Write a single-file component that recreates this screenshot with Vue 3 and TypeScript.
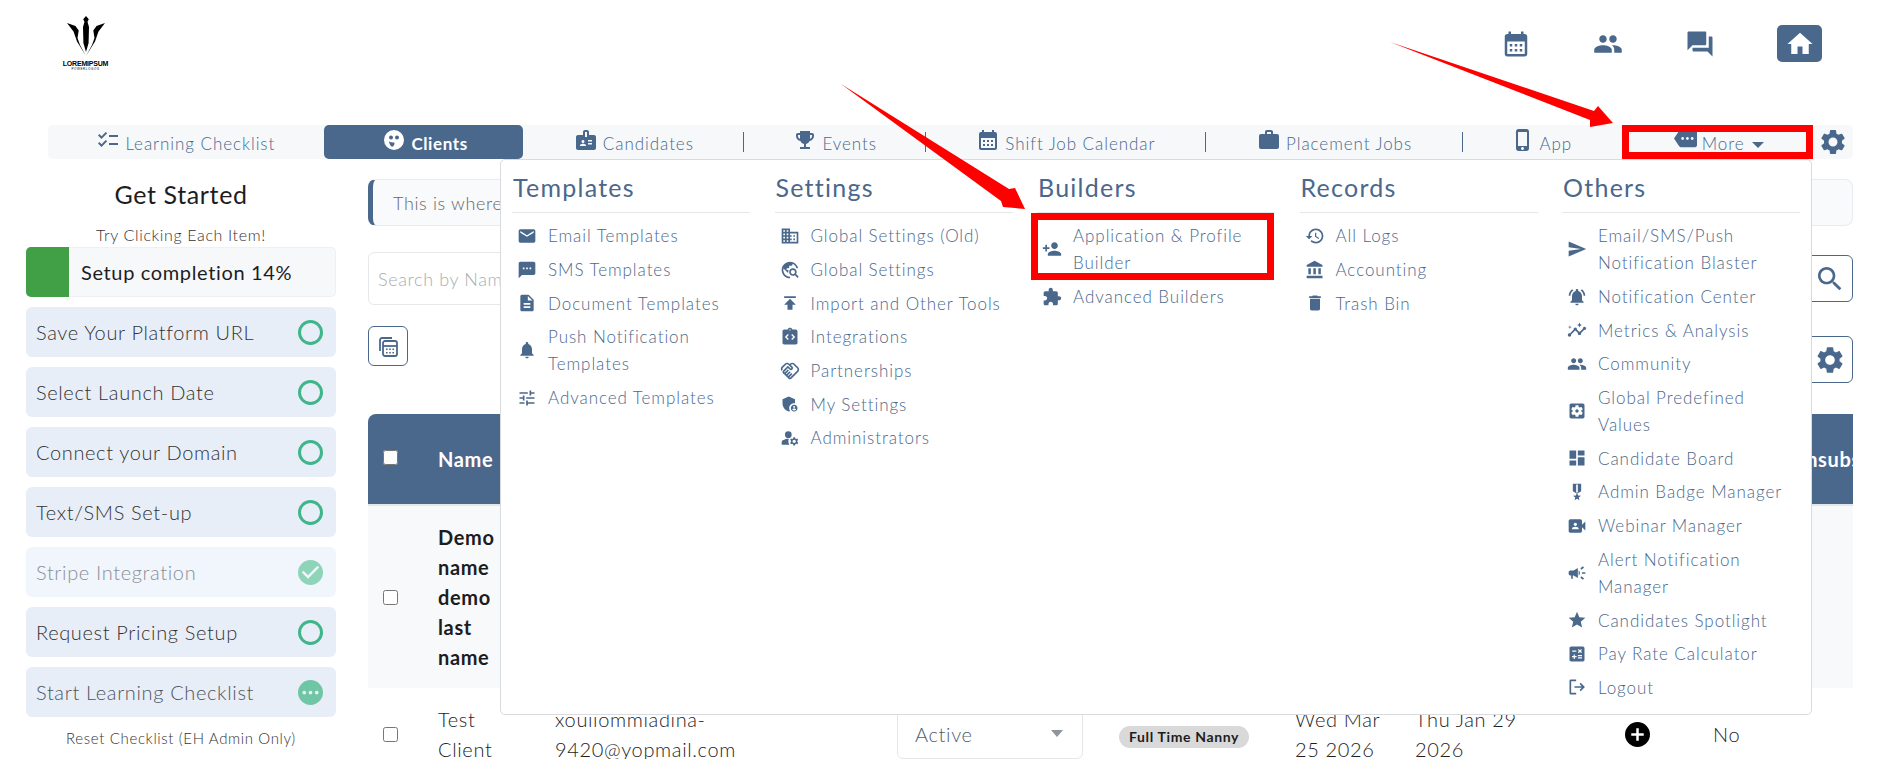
<script setup lang="ts">
const P: Record<string, string> = {
  email: 'M20 4H4c-1.1 0-1.99.9-1.99 2L2 18c0 1.1.9 2 2 2h16c1.1 0 2-.9 2-2V6c0-1.1-.9-2-2-2zm0 4l-8 5-8-5V6l8 5 8-5v2z',
  sms: 'M20 2H4c-1.1 0-1.99.9-1.99 2L2 22l4-4h14c1.1 0 2-.9 2-2V4c0-1.1-.9-2-2-2zM9 11H7V9h2v2zm4 0h-2V9h2v2zm4 0h-2V9h2v2z',
  doc: 'M14 2H6c-1.1 0-1.99.9-1.99 2L4 20c0 1.1.89 2 1.99 2H18c1.1 0 2-.9 2-2V8l-6-6zm2 16H8v-2h8v2zm0-4H8v-2h8v2zm-3-5V3.5L18.5 9H13z',
  bell: 'M12 22c1.1 0 2-.9 2-2h-4c0 1.1.89 2 2 2zm6-6v-5c0-3.07-1.64-5.64-4.5-6.32V4c0-.83-.67-1.5-1.5-1.5s-1.5.67-1.5 1.5v.68C7.63 5.36 6 7.92 6 11v5l-2 2v1h16v-1l-2-2z',
  tune: 'M3 17v2h6v-2H3zM3 5v2h10V5H3zm10 16v-2h8v-2h-8v-2h-2v6h2zM7 9v2H3v2h4v2h2V9H7zm14 4v-2H11v2h10zm-6-4h2V7h4V5h-4V3h-2v6z',
  domain: 'M12 7V3H2v18h20V7H12zM6 19H4v-2h2v2zm0-4H4v-2h2v2zm0-4H4V9h2v2zm0-4H4V5h2v2zm4 12H8v-2h2v2zm0-4H8v-2h2v2zm0-4H8V9h2v2zm0-4H8V5h2v2zm10 12h-8v-2h2v-2h-2v-2h2v-2h-2V9h8v10zm-2-8h-2v2h2v-2zm0 4h-2v2h2v-2z',
  globe: 'M19.3 16.9c.4-.7.7-1.5.7-2.4 0-2.5-2-4.5-4.5-4.5S11 12 11 14.5s2 4.5 4.5 4.5c.9 0 1.7-.3 2.4-.7l3.2 3.2 1.4-1.4-3.2-3.2zm-3.8.1c-1.4 0-2.5-1.1-2.5-2.5s1.1-2.5 2.5-2.5 2.5 1.1 2.5 2.5-1.1 2.5-2.5 2.5zM12 20v2C6.48 22 2 17.52 2 12S6.48 2 12 2c4.84 0 8.87 3.44 9.8 8h-2.07c-.64-2.46-2.4-4.47-4.73-5.41V5c0 1.1-.9 2-2 2h-2v2c0 .55-.45 1-1 1H8v2h2v3H9l-4.79-4.79C4.08 10.79 4 11.38 4 12c0 4.41 3.59 8 8 8z',
  publish: 'M5 4v2h14V4H5zm0 10h4v6h6v-6h4l-7-7-7 7z',
  integ: 'M19 3h-4.18C14.4 1.84 13.3 1 12 1s-2.4.84-2.82 2H5c-1.1 0-2 .9-2 2v14c0 1.1.9 2 2 2h14c1.1 0 2-.9 2-2V5c0-1.1-.9-2-2-2zm-7-.25c.41 0 .75.34.75.75s-.34.75-.75.75-.75-.34-.75-.75.34-.75.75-.75zM10.5 14.3l-1.2 1.2L5.8 12l3.5-3.5 1.2 1.2L8.2 12l2.3 2.3zm4.2 1.2l-1.2-1.2 2.3-2.3-2.3-2.3 1.2-1.2 3.5 3.5-3.5 3.5z',
  shake: 'M12.22 19.85c-.18.18-.5.21-.71 0-.18-.18-.21-.5 0-.71l3.39-3.39-1.41-1.41-3.39 3.39c-.19.2-.51.19-.71 0-.21-.21-.18-.53 0-.71l3.39-3.39-1.41-1.41-3.39 3.39c-.18.18-.5.21-.71 0-.19-.19-.19-.51 0-.71l3.39-3.39-1.42-1.41-3.39 3.39c-.18.18-.5.21-.71 0-.19-.2-.19-.51 0-.71L9.52 8.4l1.87 1.86c.95.95 2.59.94 3.54 0 .98-.98.98-2.56 0-3.54l-1.86-1.86.28-.28c.78-.78 2.05-.78 2.83 0l4.24 4.24c.78.78.78 2.05 0 2.83l-8.2 8.2zm9.61-6.78c1.56-1.56 1.56-4.09 0-5.66l-4.24-4.24c-1.56-1.56-4.09-1.56-5.66 0l-.28.28-.28-.28c-1.56-1.56-4.09-1.56-5.66 0L2.17 6.71c-1.42 1.42-1.55 3.63-.4 5.19l1.45-1.45c-.39-.75-.26-1.7.37-2.33l3.54-3.54c.78-.78 2.05-.78 2.83 0l3.56 3.56c.18.18.21.5 0 .71-.21.21-.53.18-.71 0L9.52 5.57l-5.8 5.79c-.98.97-.98 2.56 0 3.54.39.39.89.63 1.42.7.07.52.3 1.02.7 1.42.4.4.9.63 1.42.7.07.52.3 1.02.7 1.42.4.4.9.63 1.42.7.07.54.31 1.03.7 1.42.47.47 1.1.73 1.77.73.67 0 1.3-.26 1.77-.73l8.21-8.19z',
  shield: 'M17 11c.34 0 .67.04 1 .09V6.27L10.5 3 3 6.27v4.91c0 4.54 3.2 8.79 7.5 9.82.55-.13 1.08-.32 1.6-.55-.69-.98-1.1-2.17-1.1-3.45 0-3.31 2.69-6 6-6zM17 13c-2.21 0-4 1.79-4 4s1.79 4 4 4 4-1.79 4-4-1.79-4-4-4zm0 1.38c.62 0 1.12.51 1.12 1.12s-.51 1.12-1.12 1.12-1.12-.51-1.12-1.12.5-1.12 1.12-1.12zm0 5.37c-.93 0-1.74-.46-2.24-1.17.05-.72 1.51-1.08 2.24-1.08s2.19.36 2.24 1.08c-.5.71-1.31 1.17-2.24 1.17z',
  admins: 'M10.67 13.02c-.22-.01-.44-.02-.67-.02-2.42 0-4.68.67-6.61 1.82-.88.52-1.39 1.5-1.39 2.53V20h9.26c-.79-1.13-1.26-2.51-1.26-4 0-1.07.25-2.07.67-2.98zM10 12a4 4 0 100-8 4 4 0 000 8zM20.75 16c0-.22-.03-.42-.06-.63l1.14-1.01-1-1.73-1.45.49c-.32-.27-.68-.48-1.08-.63L18 11h-2l-.3 1.49c-.4.15-.76.36-1.08.63l-1.45-.49-1 1.73 1.14 1.01c-.03.21-.06.41-.06.63s.03.42.06.63l-1.14 1.01 1 1.73 1.45-.49c.32.27.68.48 1.08.63L16 21h2l.3-1.49c.4-.15.76-.36 1.08-.63l1.45.49 1-1.73-1.14-1.01c.03-.21.06-.41.06-.63zM17 18c-1.1 0-2-.9-2-2s.9-2 2-2 2 .9 2 2-.9 2-2 2z',
  personAdd: 'M15 12c2.21 0 4-1.79 4-4s-1.79-4-4-4-4 1.79-4 4 1.79 4 4 4zm-9-2V7H4v3H1v2h3v3h2v-3h3v-2H6zm9 4c-2.67 0-8 1.34-8 4v2h16v-2c0-2.66-5.33-4-8-4z',
  ext: 'M20.5 11H19V7c0-1.1-.9-2-2-2h-4V3.5C13 2.12 11.88 1 10.5 1S8 2.12 8 3.5V5H4c-1.1 0-1.99.9-1.99 2v3.8H3.5c1.49 0 2.7 1.21 2.7 2.7s-1.21 2.7-2.7 2.7H2V20c0 1.1.9 2 2 2h3.8v-1.5c0-1.49 1.21-2.7 2.7-2.7 1.49 0 2.7 1.21 2.7 2.7V22H17c1.1 0 2-.9 2-2v-4h1.5c1.38 0 2.5-1.12 2.5-2.5S21.88 11 20.5 11z',
  history: 'M13 3c-4.97 0-9 4.03-9 9H1l3.89 3.89.07.14L9 12H6c0-3.87 3.13-7 7-7s7 3.13 7 7-3.13 7-7 7c-1.93 0-3.68-.79-4.94-2.06l-1.42 1.42C8.27 19.99 10.51 21 13 21c4.97 0 9-4.03 9-9s-4.03-9-9-9zm-1 5v5l4.28 2.54.72-1.21-3.5-2.08V8H12z',
  bank: 'M4 10v7h3v-7H4zm6 0v7h3v-7h-3zM2 22h19v-3H2v3zm14-12v7h3v-7h-3zm-4.5-9L2 6v2h19V6l-9.5-5z',
  trash: 'M6 19c0 1.1.9 2 2 2h8c1.1 0 2-.9 2-2V7H6v12zM19 4h-3.5l-1-1h-5l-1 1H5v2h14V4z',
  send: 'M2.01 21L23 12 2.01 3 2 10l15 2-15 2z',
  bellActive: 'M7.58 4.08L6.15 2.65C3.75 4.48 2.17 7.3 2.03 10.5h2c.15-2.65 1.51-4.97 3.55-6.42zm12.39 6.42h2c-.15-3.2-1.73-6.02-4.12-7.85l-1.42 1.43c2.02 1.45 3.39 3.77 3.54 6.42zM18 11c0-3.07-1.64-5.64-4.5-6.32V4c0-.83-.67-1.5-1.5-1.5s-1.5.67-1.5 1.5v.68C7.63 5.36 6 7.92 6 11v5l-2 2v1h16v-1l-2-2v-5zm-6 11c.14 0 .27-.01.4-.04.65-.14 1.18-.58 1.44-1.18.1-.24.15-.5.15-.78h-4c.01 1.1.9 2 2.01 2z',
  insights: 'M21 8c-1.45 0-2.26 1.44-1.93 2.51l-3.55 3.56c-.3-.09-.74-.09-1.04 0l-2.55-2.55C12.27 10.45 11.46 9 10 9c-1.45 0-2.27 1.44-1.93 2.52l-4.56 4.55C2.44 15.74 1 16.55 1 18c0 1.1.9 2 2 2 1.45 0 2.26-1.44 1.93-2.51l4.55-4.56c.3.09.74.09 1.04 0l2.55 2.55C12.73 16.55 13.54 18 15 18c1.45 0 2.27-1.44 1.93-2.52l3.56-3.55c1.07.33 2.51-.48 2.51-1.93 0-1.1-.9-2-2-2zM15 9l.94-2.07L18 6l-2.06-.93L15 3l-.92 2.07L12 6l2.08.93zM3.5 11L4 9l2-.5L4 8l-.5-2L3 8l-2 .5L3 9z',
  people: 'M16 11c1.66 0 2.99-1.34 2.99-3S17.66 5 16 5c-1.66 0-3 1.34-3 3s1.34 3 3 3zm-8 0c1.66 0 2.99-1.34 2.99-3S9.66 5 8 5C6.34 5 5 6.34 5 8s1.34 3 3 3zm0 2c-2.33 0-7 1.17-7 3.5V19h14v-2.5c0-2.33-4.67-3.5-7-3.5zm8 0c-.29 0-.62.02-.97.05 1.16.84 1.97 1.97 1.97 3.45V19h6v-2.5c0-2.33-4.67-3.5-7-3.5z',
  settingsBox: 'M12 10c-1.1 0-2 .9-2 2s.9 2 2 2 2-.9 2-2-.9-2-2-2zm7-7H5c-1.11 0-2 .9-2 2v14c0 1.1.89 2 2 2h14c1.11 0 2-.9 2-2V5c0-1.1-.89-2-2-2zm-1.75 9c0 .23-.02.46-.05.68l1.48 1.16c.13.11.17.3.08.45l-1.4 2.42c-.09.15-.27.21-.43.15l-1.74-.7c-.36.28-.76.51-1.18.69l-.26 1.85c-.03.17-.18.3-.35.3h-2.8c-.17 0-.32-.13-.35-.29l-.26-1.85c-.43-.18-.82-.41-1.18-.69l-1.74.7c-.16.06-.34 0-.43-.15l-1.4-2.42c-.09-.15-.05-.34.08-.45l1.48-1.16c-.03-.23-.05-.46-.05-.69 0-.23.02-.46.05-.68l-1.48-1.16c-.13-.11-.17-.3-.08-.45l1.4-2.42c.09-.15.27-.21.43-.15l1.74.7c.36-.28.76-.51 1.18-.69l.26-1.85c.03-.17.18-.3.35-.3h2.8c.17 0 .32.13.35.29l.26 1.85c.43.18.82.41 1.18.69l1.74-.7c.16-.06.34 0 .43.15l1.4 2.42c.09.15.05.34-.08.45l-1.48 1.16c.03.23.05.46.05.69z',
  dash: 'M3 13h8V3H3v10zm0 8h8v-6H3v6zm10 0h8V11h-8v10zm0-18v6h8V3h-8z',
  medal: 'M17 10.43V2H7v8.43c0 .35.18.68.49.86l4.18 2.51-.99 2.34-3.41.29 2.59 2.24L9.07 22 12 20.23 14.93 22l-.78-3.33 2.59-2.24-3.41-.29-.99-2.34 4.18-2.51c.3-.18.48-.5.48-.86zm-4 1.8l-1 .6-1-.6V3h2v9.23z',
  video: 'M18 10.48V6c0-1.1-.9-2-2-2H4c-1.1 0-2 .9-2 2v12c0 1.1.9 2 2 2h12c1.1 0 2-.9 2-2v-4.48l4 3.98v-11l-4 3.98zM10 8c1.1 0 2 .9 2 2s-.9 2-2 2-2-.9-2-2 .9-2 2-2zm4 8H6v-.57c0-.81.48-1.53 1.22-1.85.85-.37 1.79-.58 2.78-.58.99 0 1.93.21 2.78.58.74.32 1.22 1.04 1.22 1.85V16z',
  campaign: 'M18 11v2h4v-2h-4zm-2 6.61c.96.71 2.21 1.65 3.2 2.39.4-.53.8-1.07 1.2-1.6-.99-.74-2.24-1.68-3.2-2.4-.4.54-.8 1.08-1.2 1.61zM20.4 5.6c-.4-.53-.8-1.07-1.2-1.6-.99.74-2.24 1.68-3.2 2.4.4.53.8 1.07 1.2 1.6.96-.72 2.21-1.65 3.2-2.4zM4 9c-1.1 0-2 .9-2 2v2c0 1.1.9 2 2 2h1v4h2v-4h1l5 3V6L8 9H4zm11.5 3c0-1.33-.58-2.53-1.5-3.35v6.69c.92-.81 1.5-2.01 1.5-3.34z',
  star: 'M12 17.27L18.18 21l-1.64-7.03L22 9.24l-7.19-.61L12 2 9.19 8.63 2 9.24l5.46 4.73L5.82 21z',
  calc: 'M19 3H5c-1.1 0-2 .9-2 2v14c0 1.1.9 2 2 2h14c1.1 0 2-.9 2-2V5c0-1.1-.9-2-2-2zm-5.97 4.06L14.09 6l1.41 1.41L16.91 6l1.06 1.06-1.41 1.41 1.41 1.41-1.06 1.06-1.41-1.4-1.41 1.41-1.06-1.06 1.41-1.41-1.41-1.42zm-6.78.66h5v1.5h-5v-1.5zM11.5 16h-2v2H8v-2H6v-1.5h2v-2h1.5v2h2V16zm6.5 1.25h-5v-1.5h5v1.5zm0-2.5h-5v-1.5h5v1.5z',
  logout: 'M11 3H4.5A1.5 1.5 0 003 4.5v15A1.5 1.5 0 004.5 21H11v-2H5V5h6V3zM16.5 7l-1.4 1.4 2.6 2.6H9v2h8.7l-2.6 2.6 1.4 1.4 5-5-5-5z',
  calendar: 'M19 4h-1V2h-2v2H8V2H6v2H5c-1.1 0-2 .9-2 2v14c0 1.1.9 2 2 2h14c1.1 0 2-.9 2-2V6c0-1.1-.9-2-2-2zm0 16H5V10h14v10zM9 14H7v-2h2v2zm4 0h-2v-2h2v2zm4 0h-2v-2h2v2zm-8 4H7v-2h2v2zm4 0h-2v-2h2v2zm4 0h-2v-2h2v2z',
  forum: 'M21 6h-2v9H6v2c0 .55.45 1 1 1h11l4 4V7c0-.55-.45-1-1-1zm-4 6V3c0-.55-.45-1-1-1H3c-.55 0-1 .45-1 1v14l4-4h10c.55 0 1-.45 1-1z',
  home: 'M10 20v-6h4v6h5v-8h3L12 3 2 12h3v8z',
  gear: 'M19.14 12.94c.04-.3.06-.61.06-.94 0-.32-.02-.64-.07-.94l2.03-1.58c.18-.14.23-.41.12-.61l-1.92-3.32c-.12-.22-.37-.29-.59-.22l-2.39.96c-.5-.38-1.03-.7-1.62-.94l-.36-2.54c-.04-.24-.24-.41-.48-.41h-3.84c-.24 0-.43.17-.47.41l-.36 2.54c-.59.24-1.13.57-1.62.94l-2.39-.96c-.22-.08-.47 0-.59.22L2.74 8.87c-.12.21-.08.47.12.61l2.03 1.58c-.05.3-.09.63-.09.94s.02.64.07.94l-2.03 1.58c-.18.14-.23.41-.12.61l1.92 3.32c.12.22.37.29.59.22l2.39-.96c.5.38 1.03.7 1.62.94l.36 2.54c.05.24.24.41.48.41h3.84c.24 0 .44-.17.47-.41l.36-2.54c.59-.24 1.13-.56 1.62-.94l2.39.96c.22.08.47 0 .59-.22l1.92-3.32c.12-.22.07-.47-.12-.61l-2.01-1.58zM12 15.6c-1.98 0-3.6-1.62-3.6-3.6s1.62-3.6 3.6-3.6 3.6 1.62 3.6 3.6-1.62 3.6-3.6 3.6z',
  search: 'M15.5 14h-.79l-.28-.27C15.41 12.59 16 11.11 16 9.5 16 5.91 13.09 3 9.5 3S3 5.91 3 9.5 5.91 16 9.5 16c1.61 0 3.09-.59 4.23-1.57l.27.28v.79l5 4.99L20.49 19l-4.99-5zm-6 0C7.01 14 5 11.99 5 9.5S7.01 5 9.5 5 14 7.01 14 9.5 11.99 14 9.5 14z',
  checklist: 'M22 7h-9v2h9V7zm0 8h-9v2h9v-2zM5.54 11L2 7.46l1.41-1.41 2.12 2.12 4.24-4.24 1.41 1.41L5.54 11zm0 8L2 15.46l1.41-1.41 2.12 2.12 4.24-4.24 1.41 1.41L5.54 19z',
  face: 'M12 2a10 10 0 100 20 10 10 0 000-20zM9 7.5a2 2 0 110 4 2 2 0 010-4zm6 0a2 2 0 110 4 2 2 0 010-4zM7 13.5c2 1 3.5 1.3 5.5 1 0 2-.5 4-2.5 4.3-1.6-.7-2.6-3-3-5.3z',
  badge: 'M20 7h-5V4c0-1.1-.9-2-2-2h-2c-1.1 0-2 .9-2 2v3H4c-1.1 0-2 .9-2 2v11c0 1.1.9 2 2 2h16c1.1 0 2-.9 2-2V9c0-1.1-.9-2-2-2zM9 12c.83 0 1.5.67 1.5 1.5S9.83 15 9 15s-1.5-.67-1.5-1.5S8.17 12 9 12zm3 6H6v-.75c0-1 2-1.5 3-1.5s3 .5 3 1.5V18zm1-9h-2V4h2v5zm5 7.5h-4V15h4v1.5zm0-3h-4V12h4v1.5z',
  trophy: 'M19 5h-2V3H7v2H5c-1.1 0-2 .9-2 2v1c0 2.55 1.92 4.63 4.39 4.94.63 1.5 1.98 2.63 3.61 2.96V19H7v2h10v-2h-4v-3.1c1.63-.33 2.98-1.46 3.61-2.96C19.08 12.63 21 10.55 21 8V7c0-1.1-.9-2-2-2zM5 8V7h2v3.82C5.84 10.4 5 9.3 5 8zm14 0c0 1.3-.84 2.4-2 2.82V7h2v1z',
  work: 'M20 6h-4V4c0-1.11-.89-2-2-2h-4c-1.11 0-2 .89-2 2v2H4c-1.11 0-1.99.89-1.99 2L2 19c0 1.11.89 2 2 2h16c1.11 0 2-.89 2-2V8c0-1.11-.89-2-2-2zm-6 0h-4V4h4v2z',
  phone: 'M15.5 1h-8C6.12 1 5 2.12 5 3.5v17C5 21.88 6.12 23 7.5 23h8c1.38 0 2.5-1.12 2.5-2.5v-17C18 2.12 16.88 1 15.5 1zm-4 21c-.83 0-1.5-.67-1.5-1.5s.67-1.5 1.5-1.5 1.5.67 1.5 1.5-.67 1.5-1.5 1.5zm4.5-4H7V4h9v14z',
  more: 'M22 3H7c-.69 0-1.23.35-1.59.88L0 12l5.41 8.11c.36.53.9.89 1.59.89h15c1.1 0 2-.9 2-2V5c0-1.1-.9-2-2-2zM9 13.5c-.83 0-1.5-.67-1.5-1.5s.67-1.5 1.5-1.5 1.5.67 1.5 1.5-.67 1.5-1.5 1.5zm5 0c-.83 0-1.5-.67-1.5-1.5s.67-1.5 1.5-1.5 1.5.67 1.5 1.5-.67 1.5-1.5 1.5zm5 0c-.83 0-1.5-.67-1.5-1.5s.67-1.5 1.5-1.5 1.5.67 1.5 1.5-.67 1.5-1.5 1.5z',
  check: 'M12 2a10 10 0 100 20 10 10 0 000-20zm-2 15l-5-5 1.4-1.4 3.6 3.6 7.6-7.6L19 8l-9 9z',
  dots: 'M12 2a10 10 0 100 20 10 10 0 000-20zM7 13.5a1.5 1.5 0 110-3 1.5 1.5 0 010 3zm5 0a1.5 1.5 0 110-3 1.5 1.5 0 010 3zm5 0a1.5 1.5 0 110-3 1.5 1.5 0 010 3z',
  plus: 'M12 2a10 10 0 100 20 10 10 0 000-20zm5 11h-4v4h-2v-4H7v-2h4V7h2v4h4v2z',
}

const topIcons = ['calendar', 'people', 'forum']

const navItems = [
  { label: 'Learning Checklist', icon: 'checklist', w: 276 },
  { label: 'Clients', icon: 'face', w: 200, active: true },
  { label: 'Candidates', icon: 'badge', w: 221, sep: true },
  { label: 'Events', icon: 'trophy', w: 182, sep: true },
  { label: 'Shift Job Calendar', icon: 'calendar', w: 280, sep: true },
  { label: 'Placement Jobs', icon: 'work', w: 258, sep: true },
  { label: 'App', icon: 'phone', w: 156 },
]

const steps = [
  { label: 'Save Your Platform URL', state: 'open' },
  { label: 'Select Launch Date', state: 'open' },
  { label: 'Connect your Domain', state: 'open' },
  { label: 'Text/SMS Set-up', state: 'open' },
  { label: 'Stripe Integration', state: 'done' },
  { label: 'Request Pricing Setup', state: 'open' },
  { label: 'Start Learning Checklist', state: 'busy' },
]

const menu = [
  {
    title: 'Templates',
    items: [
      { icon: 'email', label: 'Email Templates' },
      { icon: 'sms', label: 'SMS Templates' },
      { icon: 'doc', label: 'Document Templates' },
      { icon: 'bell', label: 'Push Notification Templates' },
      { icon: 'tune', label: 'Advanced Templates' },
    ],
  },
  {
    title: 'Settings',
    items: [
      { icon: 'domain', label: 'Global Settings (Old)' },
      { icon: 'globe', label: 'Global Settings' },
      { icon: 'publish', label: 'Import and Other Tools' },
      { icon: 'integ', label: 'Integrations' },
      { icon: 'shake', label: 'Partnerships' },
      { icon: 'shield', label: 'My Settings' },
      { icon: 'admins', label: 'Administrators' },
    ],
  },
  {
    title: 'Builders',
    items: [
      { icon: 'personAdd', label: 'Application & Profile Builder' },
      { icon: 'ext', label: 'Advanced Builders' },
    ],
  },
  {
    title: 'Records',
    items: [
      { icon: 'history', label: 'All Logs' },
      { icon: 'bank', label: 'Accounting' },
      { icon: 'trash', label: 'Trash Bin' },
    ],
  },
  {
    title: 'Others',
    items: [
      { icon: 'send', label: 'Email/SMS/Push Notification Blaster' },
      { icon: 'bellActive', label: 'Notification Center' },
      { icon: 'insights', label: 'Metrics & Analysis' },
      { icon: 'people', label: 'Community' },
      { icon: 'settingsBox', label: 'Global Predefined Values' },
      { icon: 'dash', label: 'Candidate Board' },
      { icon: 'medal', label: 'Admin Badge Manager' },
      { icon: 'video', label: 'Webinar Manager' },
      { icon: 'campaign', label: 'Alert Notification Manager' },
      { icon: 'star', label: 'Candidates Spotlight' },
      { icon: 'calc', label: 'Pay Rate Calculator' },
      { icon: 'logout', label: 'Logout' },
    ],
  },
]
</script>

<template>
  <div class="page">
    <header class="top">
      <div class="logo">
        <svg class="logo-mark" viewBox="0 0 38 40">
          <path d="M19 0l2.8 3.2-1.3 2.6 1.5 5.2-.4 16-2.6 9-2.6-9-.4-16 1.5-5.2-1.3-2.6zM0 7l8.5 3 3.2 4.5-1.2 7.5 2.5 7L19 40l-9-14.5-3.5-10zM38 7l-8.5 3-3.2 4.5 1.2 7.5-2.5 7L19 40l9-14.5 3.5-10z" />
        </svg>
        <span class="logo-name">LOREMIPSUM</span>
        <span class="logo-sub">POWERLOGOS</span>
      </div>
      <div class="top-icons">
        <span v-for="name in topIcons" :key="name" class="top-icon">
          <svg viewBox="0 0 24 24"><path :d="P[name]" /></svg>
        </span>
        <span class="home-btn"><svg viewBox="0 0 24 24"><path :d="P.home" /></svg></span>
      </div>
    </header>

    <nav class="nav">
      <a
        v-for="item in navItems"
        :key="item.label"
        class="nav-item"
        :class="{ active: item.active, sep: item.sep }"
        :style="{ width: item.w + 'px' }"
      >
        <svg class="nav-icon" viewBox="0 0 24 24"><path :d="P[item.icon]" /></svg>
        <span>{{ item.label }}</span>
      </a>
      <a class="nav-item more">
        <svg class="nav-icon more-icon" viewBox="0 0 24 24"><path :d="P.more" /></svg>
        <span>More</span>
        <i class="caret"></i>
      </a>
      <a class="nav-gear"><svg viewBox="0 0 24 24"><path :d="P.gear" /></svg></a>
    </nav>

    <div class="content">
      <aside class="side">
        <h2>Get Started</h2>
        <p class="try">Try Clicking Each Item!</p>
        <div class="progress">
          <div class="progress-fill"></div>
          <span>Setup completion 14%</span>
        </div>
        <div v-for="s in steps" :key="s.label" class="step" :class="s.state">
          <span>{{ s.label }}</span>
          <i v-if="s.state === 'open'" class="ring"></i>
          <svg v-else-if="s.state === 'done'" class="mark faded" viewBox="2 2 20 20"><path :d="P.check" /></svg>
          <svg v-else class="mark" viewBox="2 2 20 20"><path :d="P.dots" /></svg>
        </div>
        <p class="reset">Reset Checklist (EH Admin Only)</p>
      </aside>

      <main class="main">
        <div class="info">This is where you can view and manage all of your clients.</div>

        <div class="search-row">
          <div class="search-input">Search by Name, Email or Phone</div>
          <button class="out-btn search-btn"><svg viewBox="0 0 24 24"><path :d="P.search" /></svg></button>
        </div>

        <div class="tool-row">
          <button class="out-btn calc-btn">
            <svg viewBox="0 0 24 24" fill="none">
              <path class="thin" d="M4 17V6a2 2 0 012-2h10" />
              <rect class="thin" x="7" y="7" width="14" height="15" rx="2" />
              <path class="thin" d="M7 12h14" />
              <path class="dots" d="M10 14.5h1.6v1.6H10zm3.2 0h1.6v1.6h-1.6zm3.2 0H18v1.6h-1.6zM10 18h1.6v1.6H10zm3.2 0h1.6v1.6h-1.6zm3.2 0H18v1.6h-1.6z" />
            </svg>
          </button>
          <button class="out-btn gear-btn"><svg viewBox="0 0 24 24"><path :d="P.gear" /></svg></button>
        </div>

        <div class="table-wrap">
          <table>
            <colgroup>
              <col style="width: 70px" /><col style="width: 117px" /><col style="width: 342px" />
              <col style="width: 222px" /><col style="width: 176px" /><col style="width: 120px" />
              <col style="width: 210px" /><col style="width: 88px" /><col style="width: 140px" />
            </colgroup>
            <thead>
              <tr>
                <th class="box-cell"><input type="checkbox" /></th>
                <th>Name</th>
                <th>Email</th>
                <th>Status</th>
                <th>Tags</th>
                <th>Created</th>
                <th>Updated</th>
                <th>Notes</th>
                <th class="unsub"><span>Unsubscribed</span></th>
              </tr>
            </thead>
            <tbody>
              <tr class="odd">
                <td class="box-cell"><input type="checkbox" /></td>
                <td><b>Demo<br />name<br />demo<br />last<br />name</b></td>
                <td colspan="7"></td>
              </tr>
              <tr>
                <td class="box-cell"><input type="checkbox" /></td>
                <td>Test<br />Client</td>
                <td>xouiiommiadina-<br />9420@yopmail.com</td>
                <td><div class="select"><span>Active</span><i></i></div></td>
                <td><span class="chip">Full Time Nanny</span></td>
                <td>Wed Mar<br />25 2026</td>
                <td>Thu Jan 29<br />2026</td>
                <td><svg class="plus" viewBox="2 2 20 20"><path :d="P.plus" /></svg></td>
                <td>No</td>
              </tr>
            </tbody>
          </table>
        </div>
      </main>
    </div>

    <section class="dropdown">
      <div v-for="col in menu" :key="col.title" class="dd-col">
        <h3>{{ col.title }}</h3>
        <a v-for="it in col.items" :key="it.label" class="dd-item">
          <svg viewBox="0 0 24 24"><path :d="P[it.icon]" /></svg>
          <span>{{ it.label }}</span>
        </a>
      </div>
    </section>

    <div class="hl hl-more"></div>
    <div class="hl hl-builder"></div>
    <svg class="arrows" viewBox="0 0 1898 759">
      <polygon points="841,84 1009,189 1015,188 1025,209 1003,207 1001,201" />
      <polygon points="1390,42 1594,111 1598,106 1613,123 1590,127 1590,120" />
    </svg>
  </div>
</template>

<style>
html, body { margin: 0; overflow: hidden; background: #fff; }
</style>

<style scoped>
.page {
  position: relative;
  width: 1898px;
  height: 759px;
  overflow: hidden;
  background: #fff;
  color: #1d1d1f;
  font-family: "Lato", "Noto Sans", sans-serif;
  font-weight: 300;
  letter-spacing: 0.04em;
}
svg { fill: currentColor; display: block; }

.top { height: 125px; display: flex; justify-content: space-between; box-sizing: border-box; padding: 16px 76px 0 64px; }
.logo { display: flex; flex-direction: column; align-items: center; width: 43px; color: #000; }
.logo-mark { width: 38px; height: 40px; }
.logo-name { font: 800 7px/8px "Liberation Sans", sans-serif; letter-spacing: -0.2px; margin-top: 4px; white-space: nowrap; }
.logo-sub { font: 400 3px/3px "Liberation Sans", sans-serif; letter-spacing: 0.6px; white-space: nowrap; }

.top-icons { display: flex; align-items: flex-start; color: #4a688c; padding-top: 9px; gap: 62px; }
.top-icon { display: block; width: 30px; height: 30px; margin-top: 4px; }
.top-icon svg { width: 30px; height: 30px; }
.home-btn { width: 45px; height: 37px; background: #4a688c; color: #fff; border-radius: 5px; display: flex; align-items: center; justify-content: center; }
.home-btn svg { width: 30px; height: 30px; }

.nav { height: 34px; margin-left: 48px; width: 1805px; background: #f6f8fa; border-radius: 5px; display: flex; }
.nav-item { position: relative; display: flex; align-items: center; justify-content: center; gap: 5px; height: 34px; font-size: 17px; letter-spacing: 0.055em; color: #4a688c; white-space: nowrap; box-sizing: border-box; padding-top: 2px; }
.nav-item.sep::after { content: ""; position: absolute; right: 0; top: 7px; height: 20px; width: 1px; background: #4a688c; }
.nav-item.active { background: #4a688c; color: #fff; font-weight: 700; letter-spacing: 0.035em; border-radius: 5px; }
.nav-icon { width: 24px; height: 24px; margin-top: -7px; color: #4a688c; flex: none; }
.active .nav-icon { color: #fff; margin-left: 3px; }
.more { width: 191px; padding-left: 8px; }
.more-icon { width: 23px; height: 23px; margin-top: -9px; }
.caret { width: 0; height: 0; border: 6px solid transparent; border-top: 6px solid #4a688c; border-bottom: 0; margin-left: 2px; margin-top: 3px; }
.nav-gear { width: 40px; display: flex; align-items: center; justify-content: center; color: #4a688c; padding-left: 3px; }
.nav-gear svg { width: 30px; height: 30px; }

.content { display: flex; }
.side { width: 310px; margin-left: 26px; flex: none; }
.side h2 { margin: 20px 0 0; text-align: center; font-size: 25px; font-weight: 400; line-height: 30px; }
.try { margin: 14px 0 0; text-align: center; font-size: 16px; line-height: 24px; color: #333; }
.progress { display: flex; align-items: center; height: 50px; margin-top: 0; background: #f7f8fa; border-radius: 5px; box-shadow: 0 0 0 1px #eef0f3 inset; overflow: hidden; font-size: 20px; font-weight: 400; }
.progress-fill { width: 43px; height: 100%; background: #41a046; margin-right: 12px; }
.step { display: flex; align-items: center; justify-content: space-between; height: 50px; margin-top: 10px; padding: 0 13px 0 10px; background: #e8eef8; border-radius: 6px; font-size: 20px; color: #333; }
.step.done { background: #f1f5fc; color: #8b8f95; }
.step.busy { color: #4e5560; }
.ring { display: block; width: 25px; height: 25px; box-sizing: border-box; border: 3px solid #3fb58a; border-radius: 50%; }
.mark { width: 25px; height: 25px; color: #6fc6a4; }
.mark.faded { color: #8ed4b8; }
.reset { margin: 11px 0 0; text-align: center; font-size: 15px; line-height: 20px; color: #333; }

.main { position: relative; width: 1485px; margin-left: 32px; flex: none; }
.info { margin-top: 20px; height: 47px; box-sizing: border-box; border: 1px solid #e8ebef; border-left: 5px solid #4a688c; border-radius: 8px; background: #f9fafc; padding-left: 20px; display: flex; align-items: center; font-size: 18px; color: #666; }
.search-row { display: flex; align-items: center; justify-content: space-between; margin-top: 26px; height: 53px; gap: 8px; }
.search-input { flex: 1; height: 53px; box-sizing: border-box; border: 1px solid #e6e8eb; border-radius: 6px; padding-left: 9px; display: flex; align-items: center; font-size: 18px; color: #a9adb2; }
.out-btn { box-sizing: border-box; background: #fff; border: 1px solid #4a688c; border-radius: 6px; color: #4a688c; padding: 0; display: flex; align-items: center; justify-content: center; }
.search-btn { width: 86px; height: 47px; padding-left: 40px; }
.search-btn svg { width: 32px; height: 32px; }
.tool-row { display: flex; justify-content: space-between; align-items: flex-start; margin-top: 21px; height: 57px; }
.calc-btn { width: 40px; height: 40px; }
.calc-btn svg { width: 24px; height: 24px; }
.thin { stroke: #4a688c; stroke-width: 1.8; fill: none; }
.dots { fill: #4a688c; }
.gear-btn { width: 86px; height: 47px; margin-top: 10px; padding-left: 40px; }
.gear-btn svg { width: 32px; height: 32px; }

.table-wrap { margin-top: 31px; overflow: hidden; border-radius: 8px 0 0 0; }
table { border-collapse: collapse; table-layout: fixed; width: 1485px; font-size: 20px; line-height: 30px; }
th { height: 90px; padding: 0; background: #4a688c; color: #fff; font-weight: 700; text-align: left; border-bottom: 2px solid #e4e6e9; white-space: nowrap; overflow: hidden; }
td { padding: 16px 0; vertical-align: middle; white-space: nowrap; }
td b { font-weight: 700; }
.odd td { background: #f8f9fb; }
.box-cell { padding-left: 15px; box-sizing: border-box; }
input[type="checkbox"] { display: block; width: 15px; height: 15px; margin: 0; }
th.box-cell input { margin-bottom: 4px; }
.unsub span { margin-left: 78px; }
.select { display: flex; align-items: center; justify-content: space-between; width: 186px; height: 50px; margin-top: -1px; box-sizing: border-box; border: 1px solid #e4e6ea; border-radius: 6px; padding: 0 19px 0 17px; color: #4f6073; }
.select i { width: 0; height: 0; border: 6px solid transparent; border-top: 7px solid #8f959b; border-bottom: 0; }
.chip { display: inline-block; background: #d9d9d9; border-radius: 11px; padding: 0 10px; font-size: 14px; font-weight: 700; line-height: 22px; }
.plus { width: 25px; height: 25px; color: #000; }

.dropdown { position: absolute; left: 500px; top: 159px; width: 1312px; height: 556px; box-sizing: border-box; background: #fff; border: 1px solid #d9dbde; border-radius: 5px; padding: 0 11px; display: grid; grid-template-columns: repeat(5, 238px); column-gap: 24.5px; color: #4a688c; }
.dd-col h3 { margin: 0 0 6px; height: 53px; box-sizing: border-box; padding: 12px 1px 0; border-bottom: 1.5px solid #e5e7ea; font-size: 25px; font-weight: 400; line-height: 30px; letter-spacing: 0.05em; }
.dd-item { display: flex; align-items: center; padding: 3.35px 0 3.35px 5px; font-size: 17px; letter-spacing: 0.055em; line-height: 27px; color: #4a688c; }
.dd-item span { max-width: 192px; }
.dd-item svg { width: 20px; height: 20px; flex: none; margin-right: 11px; color: #4a688c; }

.hl { position: absolute; box-sizing: border-box; border: 7px solid #ff0000; }
.hl-more { left: 1622px; top: 125px; width: 191px; height: 34px; }
.hl-builder { left: 1031px; top: 213px; width: 243px; height: 67px; }
.arrows { position: absolute; left: 0; top: 0; width: 1898px; height: 759px; fill: #ff0000; pointer-events: none; }
</style>
